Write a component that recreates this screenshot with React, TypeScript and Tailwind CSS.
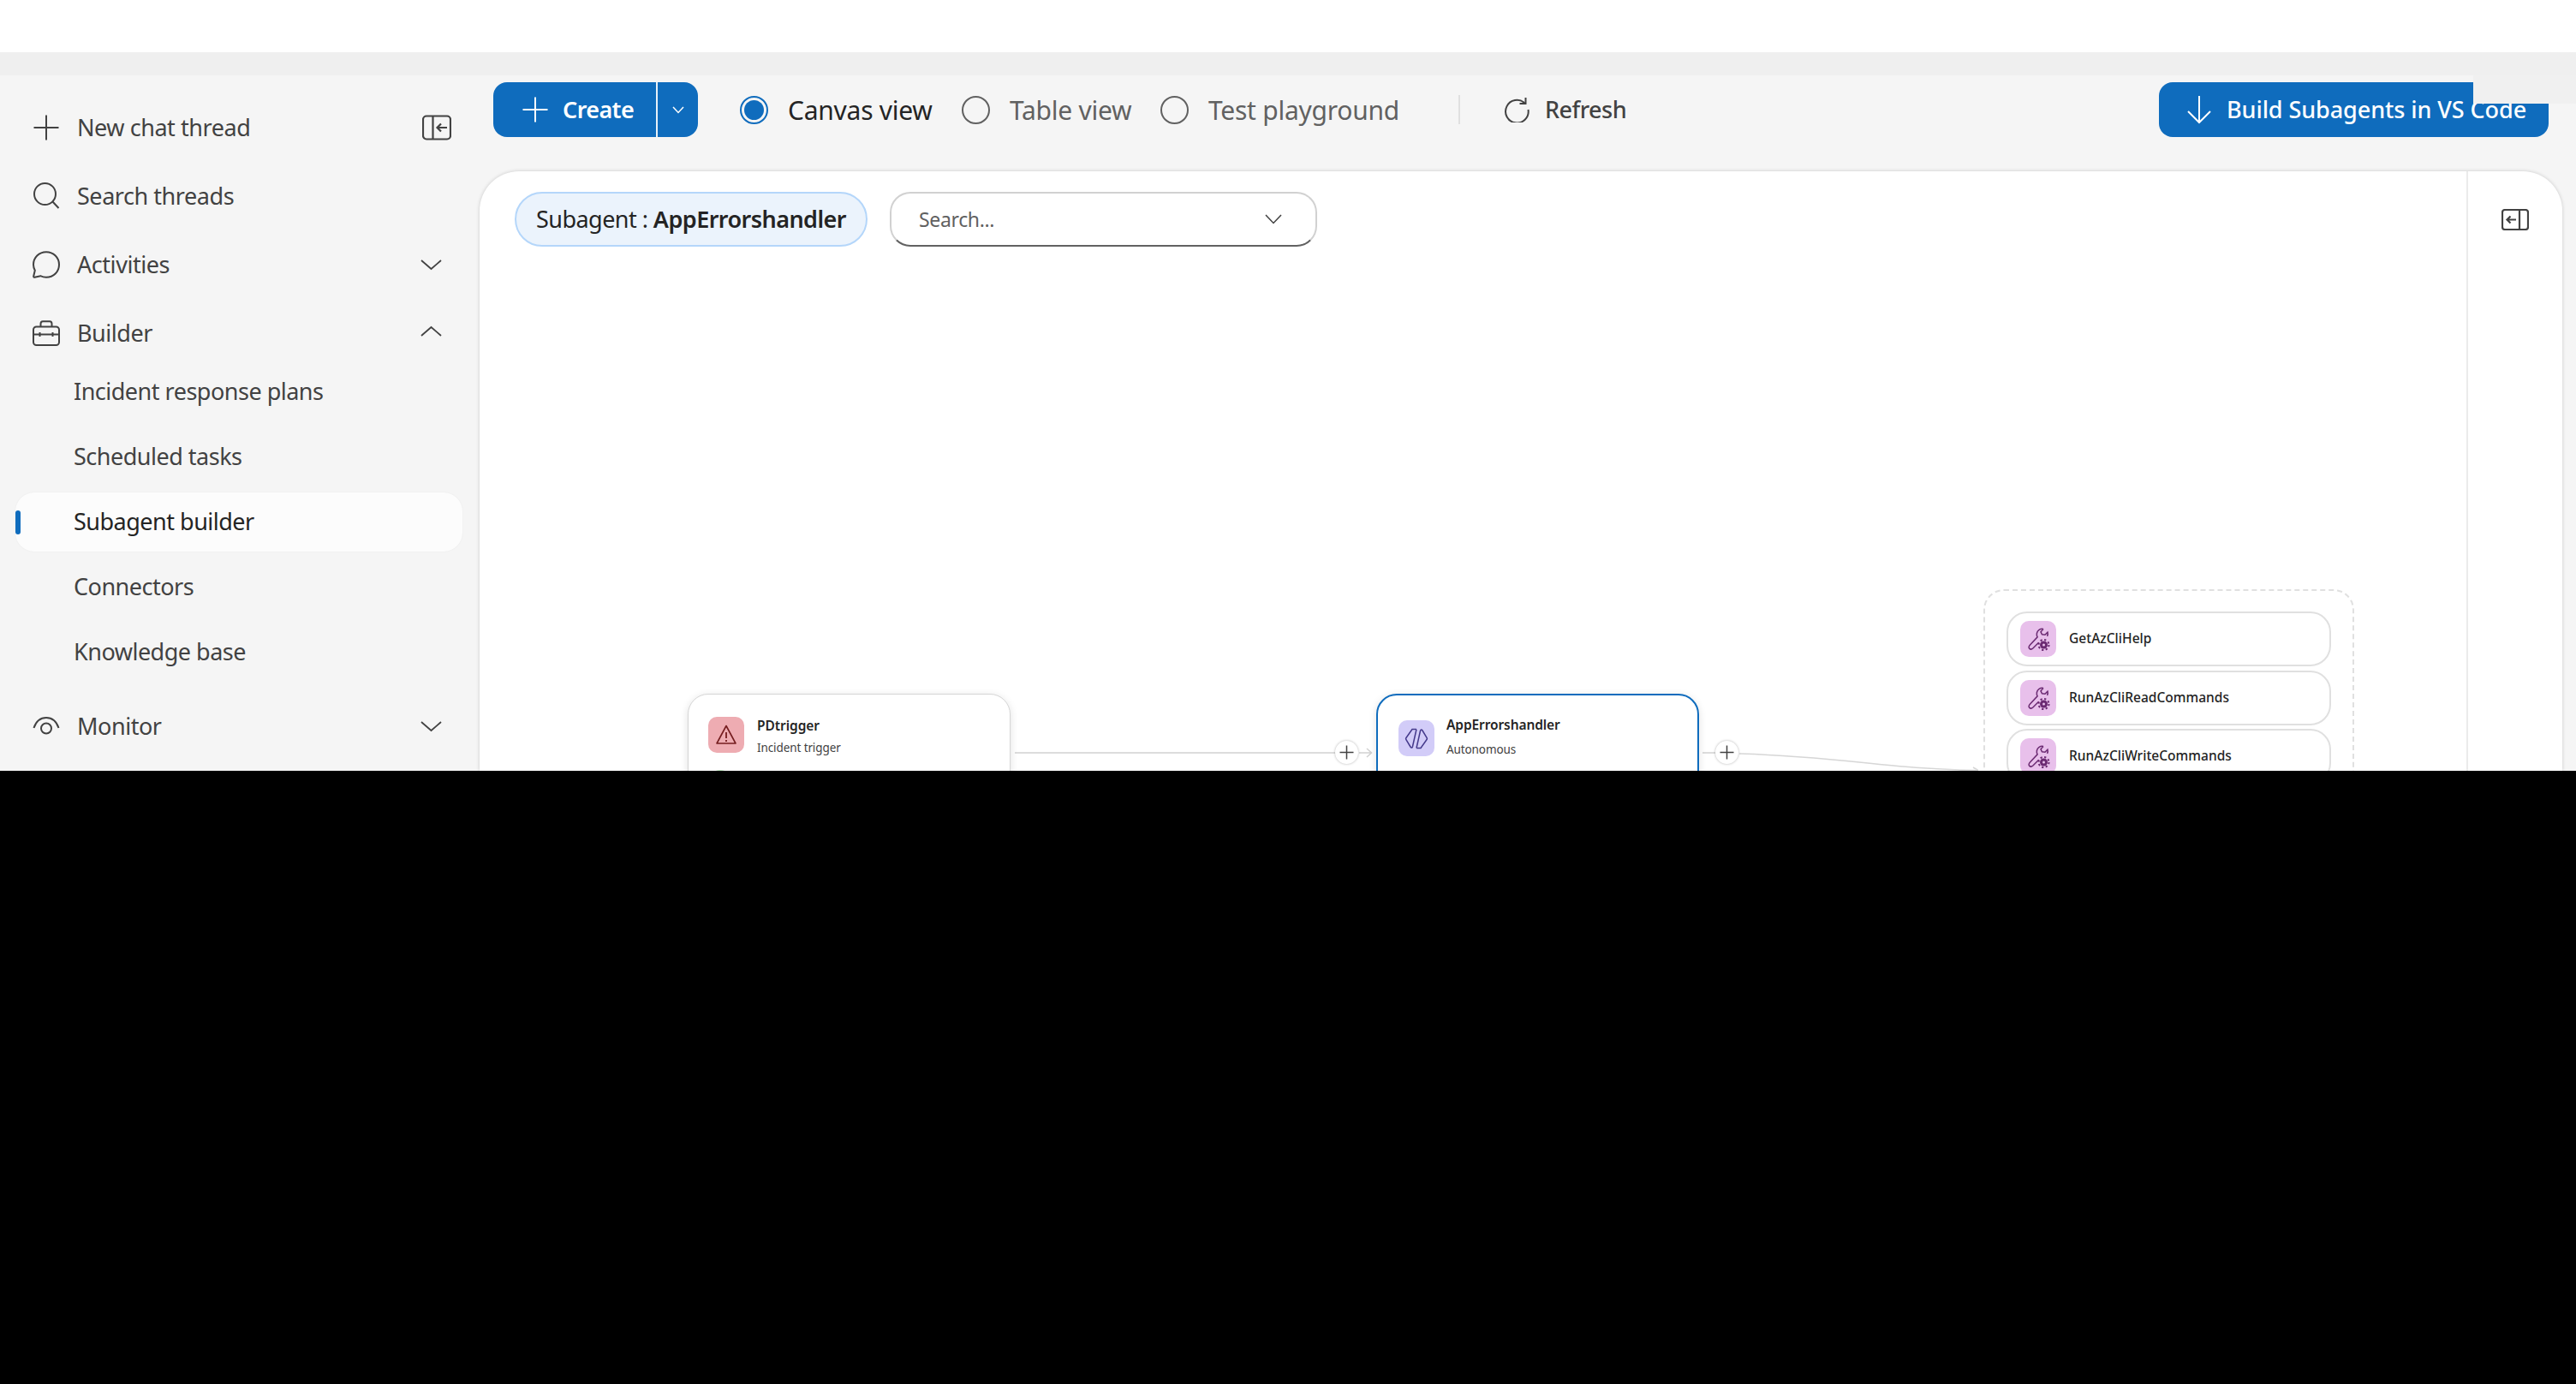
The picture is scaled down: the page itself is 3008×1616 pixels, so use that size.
import React from "react";

const FONT = "font-['Noto_Sans','Open_Sans',sans-serif]";

function Icon({ w, h, children, className = "" }: { w: number; h: number; children: React.ReactNode; className?: string }) {
  return (
    <svg width={w} height={h} viewBox={`0 0 ${w} ${h}`} fill="none" stroke="currentColor" strokeWidth="2" className={"shrink-0 " + className}>
      {children}
    </svg>
  );
}

function Chevron({ up = false, size = 25 }: { up?: boolean; size?: number }) {
  const mid = size / 2;
  return (
    <Icon w={size} h={14} className="text-[#424242]">
      <path d={up ? `M1 12 L${mid} 2 L${size - 1} 12` : `M1 2 L${mid} 12 L${size - 1} 2`} strokeWidth="1.8" />
    </Icon>
  );
}

function NavRow({ icon, label, right }: { icon: React.ReactNode; label: string; right?: React.ReactNode }) {
  return (
    <div className="h-[80px] flex items-center pl-[38px] text-[#424242]">
      <div className="w-8 h-8 flex items-center justify-center shrink-0">{icon}</div>
      <span className="ml-[20px] text-[27px] tracking-[-0.45px]">{label}</span>
      {right && <div className="ml-auto flex items-center">{right}</div>}
    </div>
  );
}

function SubRow({ label, active = false }: { label: string; active?: boolean }) {
  return (
    <div className="h-[76px] flex items-center">
      {active ? (
        <div className="relative ml-[18px] w-[522px] h-[69px] rounded-[22px] bg-[#fcfcfc] shadow-[0_0_2px_rgba(0,0,0,0.06)] flex items-center pl-[68px] text-[#242424]">
          <div className="absolute left-0 top-[21px] w-[6px] h-[28px] rounded-full bg-[#0f6cbd]" />
          <span className="text-[27px] tracking-[-0.5px]">{label}</span>
        </div>
      ) : (
        <span className="ml-[86px] text-[27px] tracking-[-0.5px] text-[#424242]">{label}</span>
      )}
    </div>
  );
}

function Sidebar() {
  return (
    <aside className="w-[560px] shrink-0 pt-[21px]">
      <NavRow
        label="New chat thread"
        icon={
          <Icon w={32} h={32}>
            <path d="M16 1.5 V30.5 M1.5 16 H30.5" />
          </Icon>
        }
        right={
          <Icon w={34} h={30} className="mr-[33px]">
            <rect x="1" y="1.5" width="32" height="27" rx="4" strokeWidth="2.2" />
            <path d="M12.5 2 V28" strokeWidth="2.2" />
            <path d="M29 15 H17.5 M22 10.5 L17.5 15 L22 19.5" strokeWidth="2.2" />
          </Icon>
        }
      />
      <NavRow
        label="Search threads"
        icon={
          <Icon w={32} h={32}>
            <circle cx="14.5" cy="13.5" r="12.5" />
            <path d="M23.5 22.5 L30.5 30" />
          </Icon>
        }
      />
      <NavRow
        label="Activities"
        icon={
          <Icon w={32} h={32}>
            <path d="M16 1.2 C24.500 1.200 31 7.700 31 16 C31 24.300 24.500 30.800 16 30.800 C13.500 30.800 11.300 30.200 9.200 29.200 L2.500 30.800 C1.700 31 1 30.300 1.200 29.500 L2.800 22.800 C1.800 20.800 1 18.500 1 16 C1 7.700 7.500 1.200 16 1.200 Z" />
          </Icon>
        }
        right={<div className="mr-[44px]"><Chevron /></div>}
      />
      <NavRow
        label="Builder"
        icon={
          <Icon w={32} h={30}>
            <rect x="1" y="7.500" width="30" height="21.500" rx="3.500" />
            <path d="M9.500 7 V4 C9.500 2.400 10.500 1.200 12 1.200 H20 C21.500 1.200 22.500 2.400 22.500 4 V7" />
            <path d="M1 16.500 H31 M8.500 14 V19 M23.500 14 V19" />
          </Icon>
        }
        right={<div className="mr-[44px] mb-[5px]"><Chevron up /></div>}
      />
      <div className="-mt-[10px]">
        <SubRow label="Incident response plans" />
        <SubRow label="Scheduled tasks" />
        <SubRow label="Subagent builder" active />
        <SubRow label="Connectors" />
        <SubRow label="Knowledge base" />
      </div>
      <div className="mt-[9px]">
        <NavRow
          label="Monitor"
          icon={
            <Icon w={32} h={26}>
              <circle cx="16" cy="15.500" r="6" />
              <path d="M1.500 15 C4 7.500 9.500 3 16 3 C22.500 3 28 7.500 30.500 15" />
            </Icon>
          }
          right={<div className="mr-[44px]"><Chevron /></div>}
        />
      </div>
    </aside>
  );
}

function Radio({ label, checked = false, width }: { label: string; checked?: boolean; width: string }) {
  return (
    <div className={"flex items-center h-[64px] " + width}>
      {checked ? (
        <div className="w-[33px] h-[33px] rounded-full border-2 border-[#0f6cbd] flex items-center justify-center shrink-0">
          <div className="w-[23px] h-[23px] rounded-full bg-[#0f6cbd]" />
        </div>
      ) : (
        <div className="w-[33px] h-[33px] rounded-full border-2 border-[#616161] shrink-0" />
      )}
      <span className={"ml-[23px] pt-[1px] text-[30px] tracking-[-0.25px] whitespace-nowrap " + (checked ? "text-[#242424]" : "text-[#616161]")}>{label}</span>
    </div>
  );
}

function Toolbar() {
  return (
    <div className="h-[112px] shrink-0 flex items-start pt-2 pl-4">
      <div className="flex h-[64px] w-[239px] rounded-[16px] bg-[#0f6cbd] text-white">
        <div className="w-[190px] flex items-center pl-[34px] gap-[17px]">
          <Icon w={30} h={30}>
            <path d="M15 0.500 V29.500 M0.500 15 H29.500" />
          </Icon>
          <span className="text-[27px] font-semibold tracking-[-0.6px]">Create</span>
        </div>
        <div className="w-[2px] bg-white/90" />
        <div className="flex-1 flex items-center justify-center">
          <Icon w={14} h={9}>
            <path d="M1 1 L7 7.500 L13 1" strokeWidth="1.5" />
          </Icon>
        </div>
      </div>
      <div className="ml-[49px] flex">
        <Radio label="Canvas view" checked width="w-[259px]" />
        <Radio label="Table view" width="w-[232px]" />
        <Radio label="Test playground" width="w-[348px]" />
      </div>
      <div className="mt-[15px] w-[2px] h-[34px] bg-[#e0e0e0]" />
      <div className="ml-[51px] flex items-center h-[64px] gap-[18px] text-[#424242]">
        <Icon w={30} h={30}>
          <path d="M24.500 7.500 A13.300 13.300 0 1 0 28.500 15" />
          <path d="M25.500 1 V8 H18.500" />
        </Icon>
        <span className="pt-[1px] text-[27px] font-medium tracking-[-0.5px]">Refresh</span>
      </div>
      <div className="ml-auto mr-[32px] flex items-center h-[64px] w-[455px] rounded-[16px] bg-[#0f6cbd] text-white pl-[33px] gap-[18px]">
        <Icon w={28} h={34}>
          <path d="M14 1 V32 M1 19 L14 32 L27 19" />
        </Icon>
        <span className="pt-[1px] text-[27px] font-medium tracking-[-0.08px] whitespace-nowrap">Build Subagents in VS Code</span>
      </div>
    </div>
  );
}

function ToolCard({ label }: { label: string }) {
  return (
    <div className="h-[64px] shrink-0 rounded-[24px] border-2 border-[#e0e0e0] bg-white flex items-center pl-[14px] gap-[15px]">
      <div className="w-[42px] h-[42px] rounded-[10px] bg-[#e8c0eb] text-[#6b2a72] shrink-0">
        <Icon w={42} h={42}>
          <path
            d="M27 9.500c-3.500-.8-7 1.500-7.600 5-.3 1.600 0 3 .7 4.300L11.500 28c-1.600 1.700-1.800 3.400-.7 4.400 1.100 1 2.800.8 4.300-.6l6.500-6.500M27 9.500l-3 3.300 1.500 3 3.500.5 3-3.200c.5 1.700.3 3.300-.5 4.700"
            strokeWidth="1.500"
          />
          <circle cx="27.500" cy="28" r="4.500" fill="currentColor" stroke="none" />
          <circle cx="27.500" cy="28" r="6" strokeWidth="2" strokeDasharray="2.200 2.500" />
          <circle cx="27.500" cy="28" r="1.500" fill="#e8c0eb" stroke="none" />
        </Icon>
      </div>
      <span className="text-[15.500px] font-medium text-[#242424] tracking-[0.02px]">{label}</span>
    </div>
  );
}

function PlusDot({ className }: { className: string }) {
  return (
    <div className={"absolute w-[27px] h-[27px] rounded-full bg-white shadow-[0_0_3px_rgba(0,0,0,0.3)] flex items-center justify-center text-[#424242] " + className}>
      <Icon w={17} h={17}>
        <path d="M8.500 0.500 V16.500 M0.500 8.500 H16.500" strokeWidth="1.500" />
      </Icon>
    </div>
  );
}

const AGENT_PATH = "M21 10.500 H16 L8.800 20.700 C8.500 21.200 8.500 21.800 8.800 22.300 L14 31 C14.800 32.300 16 32.300 16.400 31 L21 10.500";

function Canvas() {
  return (
    <div className="relative flex-1">
      <div className="flex gap-[26px] pt-6 pl-[41px]">
        <div className="h-[64px] w-[412px] rounded-full bg-[#ebf3fc] border-2 border-[#b4d6fa] flex items-center justify-center text-[27px] text-[#242424] tracking-[-0.55px] whitespace-nowrap">
          Subagent :&nbsp;<span className="font-semibold">AppErrorshandler</span>
        </div>
        <div className="h-[64px] w-[499px] rounded-[24px] border-2 border-[#d1d1d1] border-b-[#616161] flex items-center justify-between pl-[32px] pr-[39px]">
          <span className="text-[23px] text-[#616161] tracking-[-0.35px]">Search...</span>
          <Icon w={20} h={12} className="text-[#424242]">
            <path d="M1 1 L10 10.500 L19 1" strokeWidth="1.500" />
          </Icon>
        </div>
      </div>

      <svg width="1760" height="700" viewBox="0 0 1760 700" fill="none" className="absolute left-0 top-0">
        <path d="M625 679 H1000" stroke="#dcdcdc" strokeWidth="2" />
        <path d="M1027 679 H1041 M1036 674 L1041.500 679 L1036 684" stroke="#d1d1d1" strokeWidth="1.500" />
        <path d="M1428 679 H1444" stroke="#dcdcdc" strokeWidth="2" />
        <path d="M1471 680 C1600 684 1640 698 1750 699.500" stroke="#d6d6d6" strokeWidth="1.500" />
        <path d="M1744 696 L1750 699.500" stroke="#d6d6d6" strokeWidth="1.500" />
      </svg>

      <div className="absolute left-[243px] top-[610px] w-[377px] h-[200px] rounded-[24px] bg-white border border-[#d6d6d6] shadow-[0_2px_10px_rgba(0,0,0,0.12)] pl-[23px] pt-[26px]">
        <div className="flex">
          <div className="w-[42px] h-[42px] rounded-[10px] bg-[#eeacb2] text-[#751d1f] shrink-0">
            <Icon w={42} h={42}>
              <path d="M21 10.500 L32 31 H10 Z" strokeWidth="1.600" strokeLinejoin="round" />
              <path d="M21 18 V25 M21 27 V29" strokeWidth="1.800" />
            </Icon>
          </div>
          <div className="ml-[15px]">
            <div className="text-[15.500px] leading-[21px] font-semibold text-[#242424] tracking-[-0.05px]">PDtrigger</div>
            <div className="mt-[5px] text-[13.500px] leading-[20px] text-[#424242] tracking-[-0.1px]">Incident trigger</div>
          </div>
        </div>
        <div className="mt-[16px] w-[28px] h-[28px] rounded-full border-2 border-[#bde5bd]" />
      </div>

      <div className="absolute left-[1047px] top-[610px] w-[377px] h-[200px] rounded-[24px] bg-white border-2 border-[#0f6cbd] shadow-[0_2px_10px_rgba(0,0,0,0.12)] pl-[24px] pt-[29px]">
        <div className="flex">
          <div className="w-[42px] h-[42px] rounded-[10px] bg-[#d2ccf8] text-[#453a8c] shrink-0">
            <Icon w={42} h={42}>
              <path d={AGENT_PATH} strokeWidth="1.500" />
              <path d={AGENT_PATH} strokeWidth="1.500" transform="rotate(180 21 21.500)" />
            </Icon>
          </div>
          <div className="ml-[14px]">
            <div className="text-[15.500px] leading-[21px] font-semibold text-[#242424] -mt-[5px] tracking-[-0.1px]">AppErrorshandler</div>
            <div className="mt-[8px] text-[13.500px] leading-[20px] text-[#424242] tracking-[-0.1px]">Autonomous</div>
          </div>
        </div>
      </div>

      <PlusDot className="left-[999px] top-[665px]" />
      <PlusDot className="left-[1443px] top-[665px]" />

      <div className="absolute left-[1756px] top-[488px] w-[433px] h-[320px] rounded-[24px] border-2 border-dashed border-[#e0e0e0] bg-white flex flex-col gap-[4.500px] pt-[24px] px-[25px]">
        <ToolCard label="GetAzCliHelp" />
        <ToolCard label="RunAzCliReadCommands" />
        <ToolCard label="RunAzCliWriteCommands" />
      </div>
    </div>
  );
}

export default function App() {
  return (
    <div className={"w-[3008px] h-[1616px] flex flex-col overflow-hidden bg-black " + FONT}>
      <div className="h-[61px] shrink-0 bg-white" />
      <div className="h-[27px] shrink-0 bg-[#efefef]" />
      <div className="relative h-[812px] shrink-0 flex bg-[#f5f5f5] overflow-hidden">
        <Sidebar />
        <main className="flex-1 flex flex-col min-w-0">
          <Toolbar />
          <div className="mr-[16px] h-[700px] rounded-t-[46px] bg-white shadow-[0_0_4px_rgba(0,0,0,0.18)] flex overflow-hidden">
            <Canvas />
            <div className="w-[112px] shrink-0 border-l-2 border-[#ebebeb] flex justify-center pt-[44px]">
              <Icon w={32} h={25} className="text-[#424242]">
                <rect x="1" y="1" width="30" height="23" rx="3" strokeWidth="2.200" />
                <path d="M21 1.500 V23.500" strokeWidth="2.200" />
                <path d="M17 12.500 H6.500 M10.500 8.500 L6.500 12.500 L10.500 16.500" strokeWidth="2.200" />
              </Icon>
            </div>
          </div>
        </main>
        <div className="absolute right-0 top-0 w-[120px] h-[33px] bg-[#f0f0f0]" />
      </div>
      <div className="flex-1 bg-black" />
    </div>
  );
}
